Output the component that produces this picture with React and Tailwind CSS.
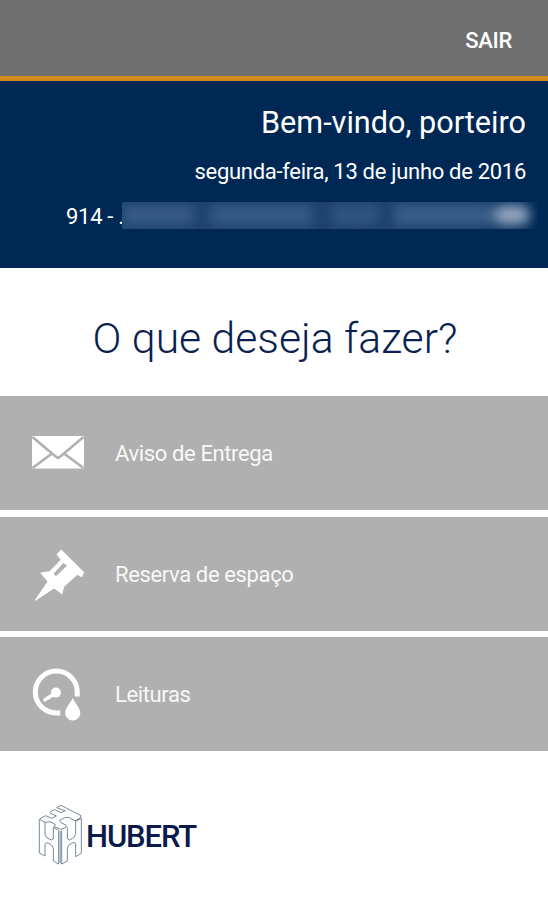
const EnvelopeIcon = () => (
  <svg className="h-14 w-14 shrink-0" viewBox="0 0 56 56" fill="none">
    <rect x="2" y="11" width="52" height="32.5" rx="0.5" fill="white" />
    <g stroke="#b0b0b0" strokeWidth="2.6">
      <path d="M2.5 12 L25 31 L28 33 L31 31 L53.5 12" />
      <path d="M2.5 43 L22 28.5" />
      <path d="M53.5 43 L34 28.5" />
    </g>
  </svg>
);

const PinIcon = () => (
  <svg className="h-14 w-14 shrink-0" viewBox="0 0 56 56">
    <path
      fill="white"
      stroke="white"
      strokeWidth="1.2"
      strokeLinejoin="round"
      fillRule="evenodd"
      d="M31.3 4.3 L53.5 26.5 L51.5 30.5 L47.3 28 L33.5 40.5 L31.8 47.6 L24.2 41.7 L5.5 54 L18.3 35.5 L11.2 27 L20 25.7 L31.5 13.8 L27.3 8.5 Z M22.6 27.8 L26 31 L38 19.5 L33.4 16.2 Z"
    />
  </svg>
);

const MeterIcon = () => (
  <svg className="h-14 w-14 shrink-0" viewBox="0 0 56 56" fill="none">
    <path
      stroke="white"
      strokeWidth="5"
      d="M30.3 47 H26.3 A21 21 0 1 1 47.3 26 V27.5 L47 30.5"
    />
    <circle cx="25.9" cy="26.6" r="5" fill="white" />
    <path stroke="white" strokeWidth="3.6" strokeLinecap="round" d="M25.5 27.3 L15 33.8" />
    <path
      fill="white"
      d="M42.7 32 C45 37 50.3 42 50.3 47 A7.6 7.6 0 0 1 35.1 47 C35.1 42 40.4 37 42.7 32 Z"
    />
  </svg>
);

const HubertCube = () => (
  <svg
    className="h-20 w-[56px] shrink-0"
    viewBox="0 0 168 240"
    fill="none"
    stroke="#6d7f92"
    strokeWidth="2.8"
    strokeLinejoin="round"
  >
    {/* top face */}
    <path d="M30 71 L47 62 L66 70 L79 63 L60 54 Q61 48 74 44 L93 53 L106 47 L80 38 L93 31 L153 62 L151 69 L135 77 L124 72 Q122 65 104 68 L89 76 L93 83 L109 91 L106 98 L92 103 L72 94 L76 88 L60 80 L45 82" />
    {/* left face */}
    <path d="M30 71 Q27 75 28 80 L28 174 L45 183 L45 147 Q48 140 57 145 Q68 150 70 159 L70 198 L86 207 L86 106 L70 97 L70 132 L64 135 L50 128 L45 119 L45 82 L30 74" />
    {/* right face */}
    <path d="M95 106 L95 207 L112 198 L112 160 Q114 149 124 145 Q135 139 137 147 L137 185 L154 175 L154 70 L137 79 L137 118 L131 128 L118 135 L112 131 L112 96" />
    <path stroke="#a3b3c6" strokeWidth="5" d="M90.5 108 L90.5 205" />
  </svg>
);

const menuItems = [
  { label: "Aviso de Entrega", Icon: EnvelopeIcon },
  { label: "Reserva de espaço", Icon: PinIcon },
  { label: "Leituras", Icon: MeterIcon },
];

export default function App() {
  return (
    <div className="flex h-[900px] w-full flex-col overflow-hidden bg-white font-['Roboto',sans-serif]">
      <header className="flex h-[81px] shrink-0 items-center justify-end border-b-[5px] border-[#d38c1c] bg-[#6f6f6f] pr-9">
        <button className="pt-[4px] text-[22px] font-medium tracking-[-0.3px] text-white">
          SAIR
        </button>
      </header>

      <section className="flex h-[187px] shrink-0 flex-col items-end bg-[#002855] pt-[22px] text-white">
        <h1 className="pr-[22px] text-[30.6px] leading-10">Bem-vindo, porteiro</h1>
        <p className="mt-[13px] pr-[22px] text-[22px] leading-8 tracking-[-0.3px]">
          segunda-feira, 13 de junho de 2016
        </p>
        <div className="mt-[12px] flex h-8 items-center pr-[10px]">
          <span className="w-[56px] pt-px whitespace-nowrap text-[22px] leading-8 tracking-[-0.3px]">
            914 - .
          </span>
          {/* hidden building name */}
          <div className="relative mb-0.5 flex h-[27px] w-[416px] items-center overflow-hidden bg-linear-to-r from-[#1d426e] from-85% to-[#002855]">
            <div className="flex w-full items-center blur-[6px]">
              <div className="h-5 w-[72px] bg-[#375a86]" />
              <div className="ml-4 h-5 w-[102px] bg-[#365a86]" />
              <div className="ml-5 h-5 w-[46px] bg-[#315581]" />
              <div className="ml-4 h-5 w-[100px] bg-[#3a5e89]" />
              <div className="h-5 w-[36px] rounded-full bg-[#91a5c0]" />
            </div>
          </div>
        </div>
      </section>

      <h2 className="flex h-32 shrink-0 items-center justify-center pt-3 pl-0.5 text-[42.7px] font-light text-[#0b1f50]">
        O que deseja fazer?
      </h2>

      <nav className="flex shrink-0 flex-col gap-[6.5px]">
        {menuItems.map(({ label, Icon }) => (
          <button
            key={label}
            className="flex h-[114px] items-center gap-[29px] bg-[#b0b0b0] pl-[30px] text-left text-[22px] tracking-[-0.37px] text-[#f8f8f8]"
          >
            <Icon />
            <span className="pt-px">{label}</span>
          </button>
        ))}
      </nav>

      <footer className="flex items-center pl-[30px] pt-11">
        <HubertCube />
        <span className="pt-1 text-[31px] font-medium tracking-[-1.1px] text-[#0a1a4a]">
          HUBERT
        </span>
      </footer>
    </div>
  );
}
